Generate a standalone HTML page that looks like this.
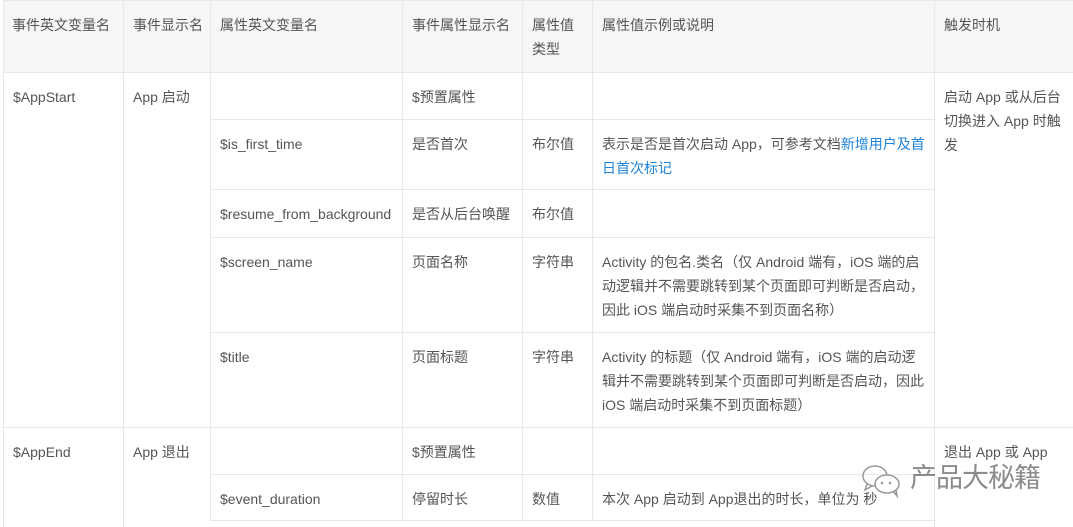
<!DOCTYPE html>
<html><head><meta charset="utf-8"><style>
*{margin:0;padding:0;box-sizing:border-box}
body{width:1073px;height:523px;overflow:hidden;background:#fff;font-family:"Liberation Sans","Noto Sans CJK SC",sans-serif;font-size:14px;color:#555;position:relative}
.c{position:absolute;border-left:1px solid #e6e8ea;border-top:1px solid #e6e8ea;padding:12px 9px 0 9px;line-height:24px}
.h{background:#f5f6f8}
a{color:#1e84d8;text-decoration:none}
.wm{position:absolute;left:910px;top:462px;font-size:27px;line-height:32px;color:#777;letter-spacing:-1px;opacity:.85;white-space:nowrap}
</style></head><body>
<div class="c h" style="left:3px;top:0;width:120px;height:72px;white-space:nowrap;padding-left:8px">事件英文变量名</div>
<div class="c h" style="left:123px;top:0;width:87px;height:72px;white-space:nowrap">事件显示名</div>
<div class="c h" style="left:210px;top:0;width:192px;height:72px">属性英文变量名</div>
<div class="c h" style="left:402px;top:0;width:120px;height:72px">事件属性显示名</div>
<div class="c h" style="left:522px;top:0;width:70px;height:72px">属性值类型</div>
<div class="c h" style="left:592px;top:0;width:342px;height:72px">属性值示例或说明</div>
<div class="c h" style="left:934px;top:0;width:140px;height:72px;border-right:1px solid #e6e8ea">触发时机</div>

<div class="c" style="left:3px;top:72px;width:120px;height:355px">$AppStart</div>
<div class="c" style="left:123px;top:72px;width:87px;height:355px">App 启动</div>
<div class="c" style="left:934px;top:72px;width:140px;height:355px">启动 App 或从后台切换进入 App 时触发</div>

<div class="c" style="left:210px;top:72px;width:192px;height:47px"></div>
<div class="c" style="left:402px;top:72px;width:120px;height:47px">$预置属性</div>
<div class="c" style="left:522px;top:72px;width:70px;height:47px"></div>
<div class="c" style="left:592px;top:72px;width:342px;height:47px"></div>

<div class="c" style="left:210px;top:119px;width:192px;height:70px">$is_first_time</div>
<div class="c" style="left:402px;top:119px;width:120px;height:70px">是否首次</div>
<div class="c" style="left:522px;top:119px;width:70px;height:70px">布尔值</div>
<div class="c" style="left:592px;top:119px;width:342px;height:70px">表示是否是首次启动 App，可参考文档<a>新增用户及首日首次标记</a></div>

<div class="c" style="left:210px;top:189px;width:192px;height:48px;white-space:nowrap">$resume_from_background</div>
<div class="c" style="left:402px;top:189px;width:120px;height:48px">是否从后台唤醒</div>
<div class="c" style="left:522px;top:189px;width:70px;height:48px">布尔值</div>
<div class="c" style="left:592px;top:189px;width:342px;height:48px"></div>

<div class="c" style="left:210px;top:237px;width:192px;height:95px">$screen_name</div>
<div class="c" style="left:402px;top:237px;width:120px;height:95px">页面名称</div>
<div class="c" style="left:522px;top:237px;width:70px;height:95px">字符串</div>
<div class="c" style="left:592px;top:237px;width:342px;height:95px">Activity 的包名.类名（仅 Android 端有，iOS 端的启动逻辑并不需要跳转到某个页面即可判断是否启动，因此 iOS 端启动时采集不到页面名称）</div>

<div class="c" style="left:210px;top:332px;width:192px;height:95px">$title</div>
<div class="c" style="left:402px;top:332px;width:120px;height:95px">页面标题</div>
<div class="c" style="left:522px;top:332px;width:70px;height:95px">字符串</div>
<div class="c" style="left:592px;top:332px;width:342px;height:95px">Activity 的标题（仅 Android 端有，iOS 端的启动逻辑并不需要跳转到某个页面即可判断是否启动，因此 iOS 端启动时采集不到页面标题）</div>

<div class="c" style="left:3px;top:427px;width:120px;height:100px">$AppEnd</div>
<div class="c" style="left:123px;top:427px;width:87px;height:100px">App 退出</div>
<div class="c" style="left:934px;top:427px;width:140px;height:100px">退出 App 或 App</div>

<div class="c" style="left:210px;top:427px;width:192px;height:47px"></div>
<div class="c" style="left:402px;top:427px;width:120px;height:47px">$预置属性</div>
<div class="c" style="left:522px;top:427px;width:70px;height:47px"></div>
<div class="c" style="left:592px;top:427px;width:342px;height:47px"></div>

<div class="c" style="left:210px;top:474px;width:192px;height:47px;border-bottom:1px solid #e6e8ea">$event_duration</div>
<div class="c" style="left:402px;top:474px;width:120px;height:47px;border-bottom:1px solid #e6e8ea">停留时长</div>
<div class="c" style="left:522px;top:474px;width:70px;height:47px;border-bottom:1px solid #e6e8ea">数值</div>
<div class="c" style="left:592px;top:474px;width:342px;height:47px;border-bottom:1px solid #e6e8ea">本次 App 启动到 App退出的时长，单位为 秒</div>

<svg style="position:absolute;left:860px;top:462px" width="44" height="40" viewBox="0 0 44 40"><g fill="none" stroke="#999" stroke-width="1.5"><ellipse cx="15" cy="14" rx="12" ry="10"/><path d="M7 22 l-2 6 l7 -4"/><ellipse cx="27" cy="22" rx="12" ry="9" fill="#fff"/><path d="M33 29 l4 5 l-1 -6"/></g><g fill="#999"><circle cx="22" cy="21" r="1.3"/><circle cx="30" cy="21" r="1.3"/></g></svg>
<div class="wm">产品大秘籍</div>
</body></html>
